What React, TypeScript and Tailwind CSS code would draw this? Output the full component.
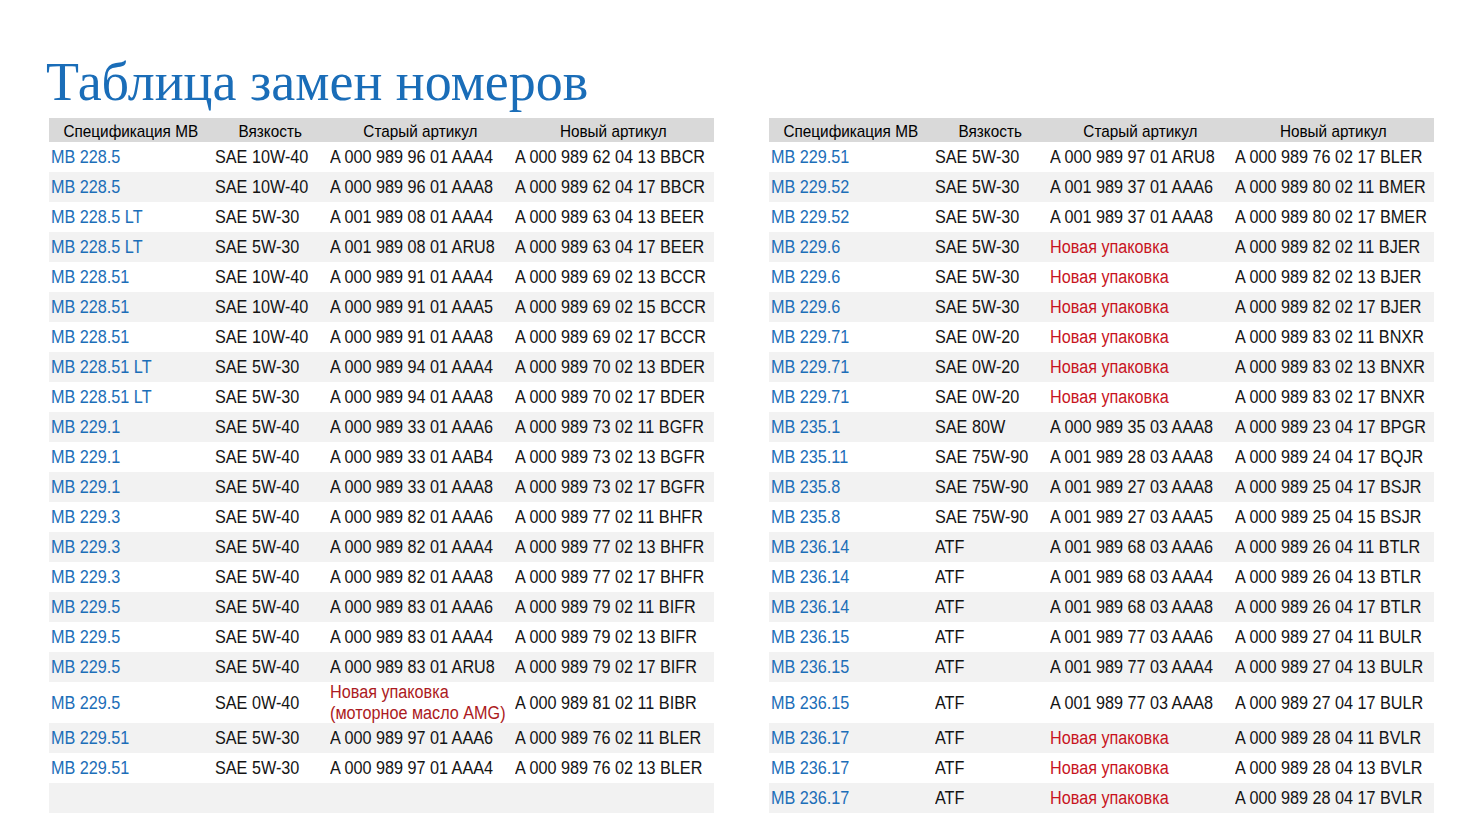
const left: [string, string, string, string][] = [
  ['MB 228.5', 'SAE 10W-40', 'A 000 989 96 01 AAA4', 'A 000 989 62 04 13 BBCR'],
  ['MB 228.5', 'SAE 10W-40', 'A 000 989 96 01 AAA8', 'A 000 989 62 04 17 BBCR'],
  ['MB 228.5 LT', 'SAE 5W-30', 'A 001 989 08 01 AAA4', 'A 000 989 63 04 13 BEER'],
  ['MB 228.5 LT', 'SAE 5W-30', 'A 001 989 08 01 ARU8', 'A 000 989 63 04 17 BEER'],
  ['MB 228.51', 'SAE 10W-40', 'A 000 989 91 01 AAA4', 'A 000 989 69 02 13 BCCR'],
  ['MB 228.51', 'SAE 10W-40', 'A 000 989 91 01 AAA5', 'A 000 989 69 02 15 BCCR'],
  ['MB 228.51', 'SAE 10W-40', 'A 000 989 91 01 AAA8', 'A 000 989 69 02 17 BCCR'],
  ['MB 228.51 LT', 'SAE 5W-30', 'A 000 989 94 01 AAA4', 'A 000 989 70 02 13 BDER'],
  ['MB 228.51 LT', 'SAE 5W-30', 'A 000 989 94 01 AAA8', 'A 000 989 70 02 17 BDER'],
  ['MB 229.1', 'SAE 5W-40', 'A 000 989 33 01 AAA6', 'A 000 989 73 02 11 BGFR'],
  ['MB 229.1', 'SAE 5W-40', 'A 000 989 33 01 AAB4', 'A 000 989 73 02 13 BGFR'],
  ['MB 229.1', 'SAE 5W-40', 'A 000 989 33 01 AAA8', 'A 000 989 73 02 17 BGFR'],
  ['MB 229.3', 'SAE 5W-40', 'A 000 989 82 01 AAA6', 'A 000 989 77 02 11 BHFR'],
  ['MB 229.3', 'SAE 5W-40', 'A 000 989 82 01 AAA4', 'A 000 989 77 02 13 BHFR'],
  ['MB 229.3', 'SAE 5W-40', 'A 000 989 82 01 AAA8', 'A 000 989 77 02 17 BHFR'],
  ['MB 229.5', 'SAE 5W-40', 'A 000 989 83 01 AAA6', 'A 000 989 79 02 11 BIFR'],
  ['MB 229.5', 'SAE 5W-40', 'A 000 989 83 01 AAA4', 'A 000 989 79 02 13 BIFR'],
  ['MB 229.5', 'SAE 5W-40', 'A 000 989 83 01 ARU8', 'A 000 989 79 02 17 BIFR'],
  ['MB 229.5', 'SAE 0W-40', 'AMG', 'A 000 989 81 02 11 BIBR'],
  ['MB 229.51', 'SAE 5W-30', 'A 000 989 97 01 AAA6', 'A 000 989 76 02 11 BLER'],
  ['MB 229.51', 'SAE 5W-30', 'A 000 989 97 01 AAA4', 'A 000 989 76 02 13 BLER'],
  ['', '', '', ''],
];

const NEW = 'NEW';

const right: [string, string, string, string][] = [
  ['MB 229.51', 'SAE 5W-30', 'A 000 989 97 01 ARU8', 'A 000 989 76 02 17 BLER'],
  ['MB 229.52', 'SAE 5W-30', 'A 001 989 37 01 AAA6', 'A 000 989 80 02 11 BMER'],
  ['MB 229.52', 'SAE 5W-30', 'A 001 989 37 01 AAA8', 'A 000 989 80 02 17 BMER'],
  ['MB 229.6', 'SAE 5W-30', NEW, 'A 000 989 82 02 11 BJER'],
  ['MB 229.6', 'SAE 5W-30', NEW, 'A 000 989 82 02 13 BJER'],
  ['MB 229.6', 'SAE 5W-30', NEW, 'A 000 989 82 02 17 BJER'],
  ['MB 229.71', 'SAE 0W-20', NEW, 'A 000 989 83 02 11 BNXR'],
  ['MB 229.71', 'SAE 0W-20', NEW, 'A 000 989 83 02 13 BNXR'],
  ['MB 229.71', 'SAE 0W-20', NEW, 'A 000 989 83 02 17 BNXR'],
  ['MB 235.1', 'SAE 80W', 'A 000 989 35 03 AAA8', 'A 000 989 23 04 17 BPGR'],
  ['MB 235.11', 'SAE 75W-90', 'A 001 989 28 03 AAA8', 'A 000 989 24 04 17 BQJR'],
  ['MB 235.8', 'SAE 75W-90', 'A 001 989 27 03 AAA8', 'A 000 989 25 04 17 BSJR'],
  ['MB 235.8', 'SAE 75W-90', 'A 001 989 27 03 AAA5', 'A 000 989 25 04 15 BSJR'],
  ['MB 236.14', 'ATF', 'A 001 989 68 03 AAA6', 'A 000 989 26 04 11 BTLR'],
  ['MB 236.14', 'ATF', 'A 001 989 68 03 AAA4', 'A 000 989 26 04 13 BTLR'],
  ['MB 236.14', 'ATF', 'A 001 989 68 03 AAA8', 'A 000 989 26 04 17 BTLR'],
  ['MB 236.15', 'ATF', 'A 001 989 77 03 AAA6', 'A 000 989 27 04 11 BULR'],
  ['MB 236.15', 'ATF', 'A 001 989 77 03 AAA4', 'A 000 989 27 04 13 BULR'],
  ['MB 236.15', 'ATF', 'A 001 989 77 03 AAA8', 'A 000 989 27 04 17 BULR'],
  ['MB 236.17', 'ATF', NEW, 'A 000 989 28 04 11 BVLR'],
  ['MB 236.17', 'ATF', NEW, 'A 000 989 28 04 13 BVLR'],
  ['MB 236.17', 'ATF', NEW, 'A 000 989 28 04 17 BVLR'],
];

const headers = ['Спецификация МВ', 'Вязкость', 'Старый артикул', 'Новый артикул'];

// narrow look: the source uses a condensed grotesque, squeeze Liberation Sans a bit
function Narrow({ children, className = '' }: { children: React.ReactNode; className?: string }) {
  return <span className={`inline-block whitespace-nowrap origin-left scale-x-90 ${className}`}>{children}</span>;
}

function OldCell({ value }: { value: string }) {
  if (value === NEW) return <Narrow className="text-[#c8141e]">Новая упаковка</Narrow>;
  if (value === 'AMG')
    return (
      <Narrow className="text-[#ac1a22] leading-[21px]">
        Новая упаковка
        <br />
        (моторное масло AMG)
      </Narrow>
    );
  return <Narrow>{value}</Narrow>;
}

function Table({ rows }: { rows: [string, string, string, string][] }) {
  return (
    <div className="w-[665px]">
      <div className="grid grid-cols-[164px_115px_185px_201px] h-6 pt-1 bg-[#d9d9d9] text-black text-[17px] leading-5">
        {headers.map((h) => (
          <div key={h} className="text-center">
            <span className="inline-block whitespace-nowrap scale-x-90">{h}</span>
          </div>
        ))}
      </div>
      {rows.map((r, i) => (
        <div
          key={i}
          className={`grid grid-cols-[164px_115px_185px_201px] items-center pl-[2px] leading-[22px] ${
            i === 18 ? 'h-[41px]' : 'h-[30px]'
          } ${i % 2 === 1 ? 'bg-[#f2f2f2]' : 'bg-white'}`}
        >
          <div className="text-[#1c6eb8]">
            <Narrow>{r[0]}</Narrow>
          </div>
          <div>
            <Narrow>{r[1]}</Narrow>
          </div>
          <div>
            <OldCell value={r[2]} />
          </div>
          <div>
            <Narrow>{r[3]}</Narrow>
          </div>
        </div>
      ))}
    </div>
  );
}

export default function App() {
  return (
    <div className="w-[1478px] h-[830px] bg-white overflow-hidden">
      <h1 className="pl-[46px] pt-[50px] h-[118px] text-[54px] leading-[64px] text-[#1a6db8] font-['Liberation_Serif',serif]">
        Таблица замен номеров
      </h1>
      <div className="flex gap-[55px] pl-[49px] text-[18px] text-[#141414] font-['Liberation_Sans',Arial,sans-serif]">
        <Table rows={left} />
        <Table rows={right} />
      </div>
    </div>
  );
}
